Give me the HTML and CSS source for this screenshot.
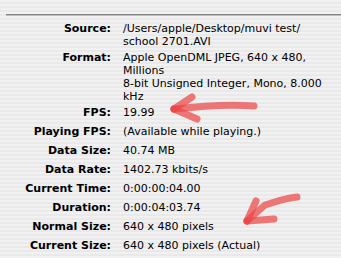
FILE: index.html
```html
<!DOCTYPE html>
<html lang="en">
<head>
  <meta charset="UTF-8" />
  <title>Movie Info</title>
  <link rel="stylesheet" href="styles.css">
</head>
<body>

<div class="panel">
  <div class="info">
    <div class="label">Source:</div>
    <div class="value">/Users/apple/Desktop/muvi test/<br>school 2701.AVI</div>

    <div class="label">Format:</div>
    <div class="value">Apple OpenDML JPEG, 640 x 480,<br>Millions<br>8-bit Unsigned Integer, Mono, 8.000<br>kHz</div>

    <div class="label">FPS:</div>
    <div class="value">19.99</div>

    <div class="label">Playing FPS:</div>
    <div class="value">(Available while playing.)</div>

    <div class="label">Data Size:</div>
    <div class="value">40.74 MB</div>

    <div class="label">Data Rate:</div>
    <div class="value">1402.73 kbits/s</div>

    <div class="label">Current Time:</div>
    <div class="value">0:00:00:04.00</div>

    <div class="label">Duration:</div>
    <div class="value">0:00:04:03.74</div>

    <div class="label">Normal Size:</div>
    <div class="value">640 x 480 pixels</div>

    <div class="label">Current Size:</div>
    <div class="value">640 x 480 pixels (Actual)</div>
  </div>

  <!-- hand-drawn arrows over the screenshot -->
  <svg class="marks" width="341" height="258" viewBox="0 0 341 258">
    <g fill="none" stroke="rgba(235,70,70,0.72)" stroke-width="7" stroke-linecap="round" stroke-linejoin="round">
      <path d="M254 106 C230 104 200 106 174 109" />
      <path d="M192 97 L174 109" />
      <path d="M174 109 L197 119" />
      <path d="M297 197 C285 198 275 202 265 205 L247 221" />
      <path d="M256 201 L247 221" />
      <path d="M247 221 L274 219" />
    </g>
  </svg>
</div>

</body>
</html>
```

FILE: styles.css
```css
body {
  margin: 0;
  font-family: "DejaVu Sans", sans-serif;
  font-size: 11px;
  color: #000;
}
.panel {
  position: relative;
  width: 341px;
  height: 258px;
  overflow: hidden;
  background: repeating-linear-gradient(#f1f1f1 0, #f1f1f1 2px, #e9e9e9 2px, #e9e9e9 4px);
  padding-top: 14px;
  box-sizing: border-box;
}
.info {
  margin-left: 6px;
  border-top: 1px solid #858585;
  padding-top: 7px;
  display: grid;
  grid-template-columns: 105px 1fr;
  column-gap: 12px;
  line-height: 13px;
}
.info::before {
  content: "";
  grid-column: 1 / -1;
  height: 1px;
  margin-top: -7px;
  margin-bottom: 6px;
  background: #bdbdbd;
}
.label, .value {
  min-height: 19px;
  padding-bottom: 3px;
  box-sizing: border-box;
  white-space: nowrap;
}
.label {
  font-weight: bold;
  text-align: right;
}
.marks {
  position: absolute;
  left: 0;
  top: 0;
}
```
